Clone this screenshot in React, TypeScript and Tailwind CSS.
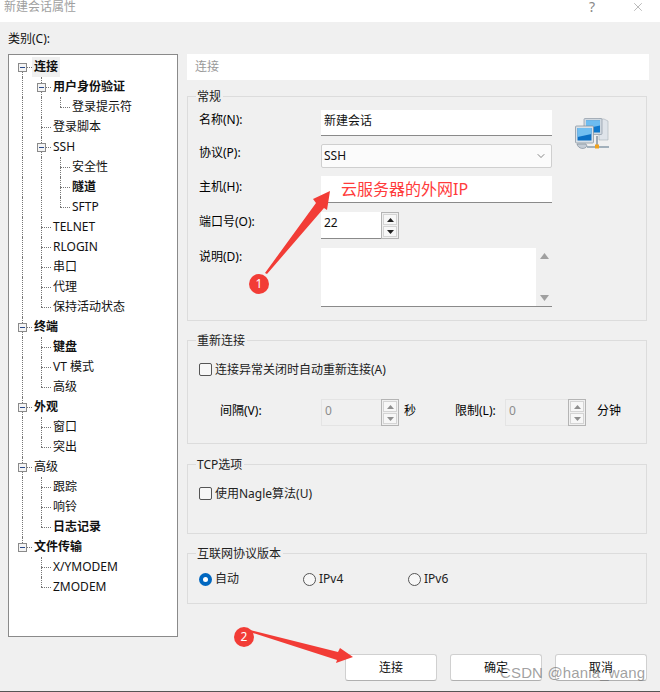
import { ChevronDown, X } from "lucide-react";
import type { ReactNode } from "react";

type TreeNode = {
  label: string;
  bold?: boolean;
  selected?: boolean;
  children?: TreeNode[];
};

const TREE: TreeNode[] = [
  {
    label: "连接",
    bold: true,
    selected: true,
    children: [
      { label: "用户身份验证", bold: true, children: [{ label: "登录提示符" }] },
      { label: "登录脚本" },
      {
        label: "SSH",
        children: [{ label: "安全性" }, { label: "隧道", bold: true }, { label: "SFTP" }],
      },
      { label: "TELNET" },
      { label: "RLOGIN" },
      { label: "串口" },
      { label: "代理" },
      { label: "保持活动状态" },
    ],
  },
  {
    label: "终端",
    bold: true,
    children: [{ label: "键盘", bold: true }, { label: "VT 模式" }, { label: "高级" }],
  },
  {
    label: "外观",
    bold: true,
    children: [{ label: "窗口" }, { label: "突出" }],
  },
  {
    label: "高级",
    children: [{ label: "跟踪" }, { label: "响铃" }, { label: "日志记录", bold: true }],
  },
  {
    label: "文件传输",
    bold: true,
    children: [{ label: "X/YMODEM" }, { label: "ZMODEM" }],
  },
];

const LINE_LEFT = ["left-[13px]", "left-[32px]", "left-[51px]"];
const STUB_LEFT = ["left-[13px] w-[10px]", "left-[32px] w-[10px]", "left-[51px] w-[10px]"];
const BOX_LEFT = ["left-[9px]", "left-[28px]", "left-[47px]"];
const TEXT_LEFT = ["ml-[23px]", "ml-[42px]", "ml-[61px]"];

function TreeRows({
  nodes,
  level = 0,
  pipes = [],
}: {
  nodes: TreeNode[];
  level?: number;
  pipes?: number[];
}) {
  return (
    <>
      {nodes.map((node, i) => {
        const isLast = i === nodes.length - 1;
        const isFirstRoot = level === 0 && i === 0;
        return (
          <div key={node.label + i}>
            <div className="relative flex h-5 items-center">
              {/* Dotted guides */}
              {pipes.map((p) => (
                <span key={p} className={`absolute top-0 h-5 border-l border-dotted border-[#777] ${LINE_LEFT[p]}`} />
              ))}
              {!isFirstRoot && (
                <span className={`absolute top-0 h-[10px] border-l border-dotted border-[#777] ${LINE_LEFT[level]}`} />
              )}
              {!isLast && (
                <span className={`absolute top-[10px] h-[10px] border-l border-dotted border-[#777] ${LINE_LEFT[level]}`} />
              )}
              <span className={`absolute top-[10px] border-t border-dotted border-[#777] ${STUB_LEFT[level]}`} />

              {/* Expander */}
              {node.children && (
                <span className={`absolute top-[6px] flex h-[9px] w-[9px] items-center justify-center border border-[#8a8a8a] bg-[#f4f4f4] ${BOX_LEFT[level]}`}>
                  <span className="h-px w-[5px] bg-[#2a4a8a]" />
                </span>
              )}

              <span
                className={`relative h-5 px-[2px] leading-5 text-[#111] ${TEXT_LEFT[level]} ${node.bold ? "font-bold" : ""} ${node.selected ? "bg-[#f0f0f0]" : ""}`}
              >
                {node.label}
              </span>
            </div>
            {node.children && (
              <TreeRows
                nodes={node.children}
                level={level + 1}
                pipes={isLast ? pipes : [...pipes, level]}
              />
            )}
          </div>
        );
      })}
    </>
  );
}

function Group({ title, className, children }: { title: string; className: string; children: ReactNode }) {
  return (
    <section className={`w-[460px] border border-[#dcdcdc] ${className}`}>
      <h3 className="-mt-2 ml-2 w-fit bg-[#f0f0f0] pr-[2px] pl-px text-xs leading-4 font-normal text-[#222]">
        {title}
      </h3>
      {children}
    </section>
  );
}

function Spinner({ value, disabled, width }: { value: string; disabled?: boolean; width: string }) {
  const arrow = disabled ? "#8f8f8f" : "#222";
  return (
    <div className={`flex h-[27px] ${width}`}>
      <div
        className={`flex h-[27px] flex-1 items-center pb-1 pl-[3px] ${
          disabled
            ? "border border-[#e4e4e4] border-r-0 bg-[#f0f0f0] text-[#8c8c8c]"
            : "border-b border-[#8a8a8a] bg-white text-[#111]"
        }`}
      >
        {value}
      </div>
      <div className="flex h-[27px] w-[18px] flex-col gap-px border border-[#b4b4b4] bg-[#f0f0f0] p-px">
        {[0, 1].map((n) => (
          <span key={n} className="flex flex-1 items-center justify-center border border-[#d4d4d4] bg-[#f7f7f7]">
            <svg width="7" height="4" viewBox="0 0 7 4">
              <path d={n === 0 ? "M3.5 0 L7 4 L0 4 Z" : "M0 0 L7 0 L3.5 4 Z"} fill={arrow} />
            </svg>
          </span>
        ))}
      </div>
    </div>
  );
}

function CheckRow({ label, className }: { label: string; className: string }) {
  return (
    <label className={`flex items-center gap-[3px] text-xs leading-4 text-[#222] ${className}`}>
      <span className="h-[13px] w-[13px] rounded-[2px] border border-[#555] bg-[#f7f7f7]" />
      <span className="mt-px">{label}</span>
    </label>
  );
}

function Radio({ label, checked, width }: { label: string; checked?: boolean; width: string }) {
  return (
    <label className={`flex items-center gap-[3px] text-[#222] ${width}`}>
      {checked ? (
        <span className="flex h-[13px] w-[13px] items-center justify-center rounded-full bg-[#0067c0]">
          <span className="h-[5px] w-[5px] rounded-full bg-white" />
        </span>
      ) : (
        <span className="h-[13px] w-[13px] rounded-full border border-[#555] bg-[#f7f7f7]" />
      )}
      {label}
    </label>
  );
}

function DialogButton({ label }: { label: string }) {
  return (
    <button className="h-[27px] w-[92px] rounded-[3px] border border-[#d0d0d0] border-b-[#b0b0b0] bg-white text-xs text-[#111]">
      {label}
    </button>
  );
}

function NetworkIcon() {
  return (
    <svg width="34" height="34" viewBox="0 0 34 34" className="ml-[23px] mt-[8px] shrink-0">
      <path d="M24 1 h5 l4 2 v19 h-9 z" fill="#dfe4ea" stroke="#aab2bb" strokeWidth="0.6" />
      <rect x="9" y="0.5" width="18" height="16" rx="1" fill="#cfd8e0" stroke="#8c98a5" strokeWidth="0.7" />
      <rect x="11" y="2.5" width="14" height="12" fill="#0f78cc" />
      <path d="M11 2.5 h14 v5 l-14 3 z" fill="#6dbcf0" />
      <rect x="0.5" y="8" width="18" height="17" rx="1" fill="#d9e0e7" stroke="#7f8c99" strokeWidth="0.7" />
      <rect x="2.5" y="10" width="14" height="12.5" fill="#0b6fc4" />
      <path d="M2.5 10 h14 v6 l-14 3 z" fill="#72bef0" />
      <path d="M2 26 c1 5 8 6 10 2 l-1 -2 z" fill="#c4ccd5" stroke="#7f8c99" strokeWidth="0.7" />
      <path d="M12 29 h22" stroke="#8fa0ae" strokeWidth="1.6" />
      <path d="M22 18 v9" stroke="#8c98a5" strokeWidth="1.6" />
      <rect x="20" y="26.5" width="4" height="4" fill="#f0a21e" />
    </svg>
  );
}

export default function App() {
  return (
    <div
      className="relative h-[692px] w-[660px] overflow-hidden bg-[#f0f0f0] text-xs"
      style={{ fontFamily: '"Noto Sans", "Noto Sans CJK SC", sans-serif' }}
    >
      {/* Title bar */}
      <div className="flex h-[22px] items-start justify-between bg-white pl-1 text-[#a0a0a0]">
        <span className="leading-[14px]">新建会话属性</span>
        <div className="flex items-center gap-[36px] pr-[15px] text-[#888]">
          <span className="text-sm leading-[14px]">?</span>
          <X size={14} strokeWidth={1} />
        </div>
      </div>

      <div className="flex px-2">
        {/* Category tree */}
        <div className="w-[170px] shrink-0">
          <div className="mt-[9px] h-4 leading-4 text-[#111]">类别(C):</div>
          <div className="mt-[7px] h-[583px] border border-[#8a8a8a] bg-white pt-[2px]">
            <TreeRows nodes={TREE} />
          </div>
        </div>

        {/* Settings */}
        <div className="ml-[9px] mt-8 w-[462px]">
          <div className="flex h-[26px] items-center bg-white pl-2 text-[#999]">连接</div>

          <Group title="常规" className="mt-4 h-[225px]">
            <div className="mt-[5px] flex">
              <div className="ml-[11px] flex w-[353px] flex-col">
                <div className="flex h-[26px]">
                  <span className="mt-[2px] w-[122px] leading-4">名称(N):</span>
                  <div className="flex flex-1 items-center border-b border-[#8a8a8a] bg-white pb-[3px] pl-[3px] text-[#111]">新建会话</div>
                </div>
                <div className="mt-2 flex h-6">
                  <span className="mt-px w-[122px] leading-4">协议(P):</span>
                  <div className="flex flex-1 items-center justify-between rounded-[2px] border border-[#cfcfcf] bg-[#fbfbfb] pr-1 pl-[2px] text-[#111]">
                    SSH
                    <ChevronDown size={12} strokeWidth={1} />
                  </div>
                </div>
                <div className="mt-2 flex h-[27px]">
                  <span className="mt-[3px] w-[122px] leading-4">主机(H):</span>
                  <div className="flex flex-1 items-center border-b border-[#8a8a8a] bg-white pl-5 text-base text-[#ff3b3b]">云服务器的外网IP</div>
                </div>
                <div className="mt-[9px] flex h-[27px]">
                  <span className="mt-[2px] w-[122px] leading-4">端口号(O):</span>
                  <Spinner value="22" width="w-[78px]" />
                </div>
                <div className="mt-[9px] flex h-[59px]">
                  <span className="mt-px w-[122px] leading-4">说明(D):</span>
                  <div className="flex flex-1 justify-end border-b border-[#8a8a8a] bg-white">
                    <div className="flex w-4 flex-col items-center justify-between bg-[#f0f0f0] py-[5px]">
                      <svg width="9" height="6" viewBox="0 0 9 6"><path d="M4.5 0 L9 6 L0 6 Z" fill="#a0a0a0" /></svg>
                      <svg width="9" height="6" viewBox="0 0 9 6"><path d="M0 0 L9 0 L4.5 6 Z" fill="#a0a0a0" /></svg>
                    </div>
                  </div>
                </div>
              </div>
              <NetworkIcon />
            </div>
          </Group>

          <Group title="重新连接" className="mt-[19px] h-[104px]">
            <CheckRow label="连接异常关闭时自动重新连接(A)" className="ml-[11px] mt-[12px]" />
            <div className="mt-[21px] flex items-start">
              <span className="ml-8 mt-1 w-[101px] leading-4">间隔(V):</span>
              <Spinner value="0" disabled width="w-[78px]" />
              <span className="ml-[5px] mt-1 w-[51px] leading-4">秒</span>
              <span className="mt-1 w-[50px] leading-4">限制(L):</span>
              <Spinner value="0" disabled width="w-[81px]" />
              <span className="ml-[11px] mt-1 leading-4">分钟</span>
            </div>
          </Group>

          <Group title="TCP选项" className="mt-5 h-[70px]">
            <CheckRow label="使用Nagle算法(U)" className="ml-[11px] mt-[12px]" />
          </Group>

          <Group title="互联网协议版本" className="mt-[19px] h-[51px]">
            <div className="ml-[11px] mt-[9px] flex items-center">
              <Radio label="自动" checked width="w-[104px]" />
              <Radio label="IPv4" width="w-[105px]" />
              <Radio label="IPv6" width="w-[80px]" />
            </div>
          </Group>

          <div className="mt-[50px] flex w-[460px] justify-end gap-[13px]">
            <DialogButton label="连接" />
            <DialogButton label="确定" />
            <DialogButton label="取消" />
          </div>
        </div>
      </div>

      {/* Annotations drawn over the screenshot */}
      <svg width="660" height="692" viewBox="0 0 660 692" className="pointer-events-none absolute top-0 left-0">
        <path d="M330 191 L313 199 L316 203 L265 273 L267 274 L324 208 L327 210 Z" fill="#f23c36" />
        <circle cx="259" cy="284" r="10" fill="#f23c36" />
        <path d="M353 657 L340 648 L338 652 L250 630 L250 632 L337 660 L336 663 Z" fill="#f23c36" />
        <circle cx="244" cy="637" r="10" fill="#f23c36" />
      </svg>
      <span className="absolute top-[275px] left-[255px] w-2 text-center text-xs leading-[18px] text-white">1</span>
      <span className="absolute top-[628px] left-[240px] w-2 text-center text-xs leading-[18px] text-white">2</span>

      {/* Watermark */}
      <span
        className="absolute top-[663px] left-[500px] text-[15px] leading-5 tracking-[0.15px] text-[#777]/70"
        style={{ fontFamily: '"Liberation Sans", sans-serif' }}
      >
        CSDN @hania_wang
      </span>

      <div className="absolute bottom-0 left-0 h-px w-full bg-[#555]" />
    </div>
  );
}
